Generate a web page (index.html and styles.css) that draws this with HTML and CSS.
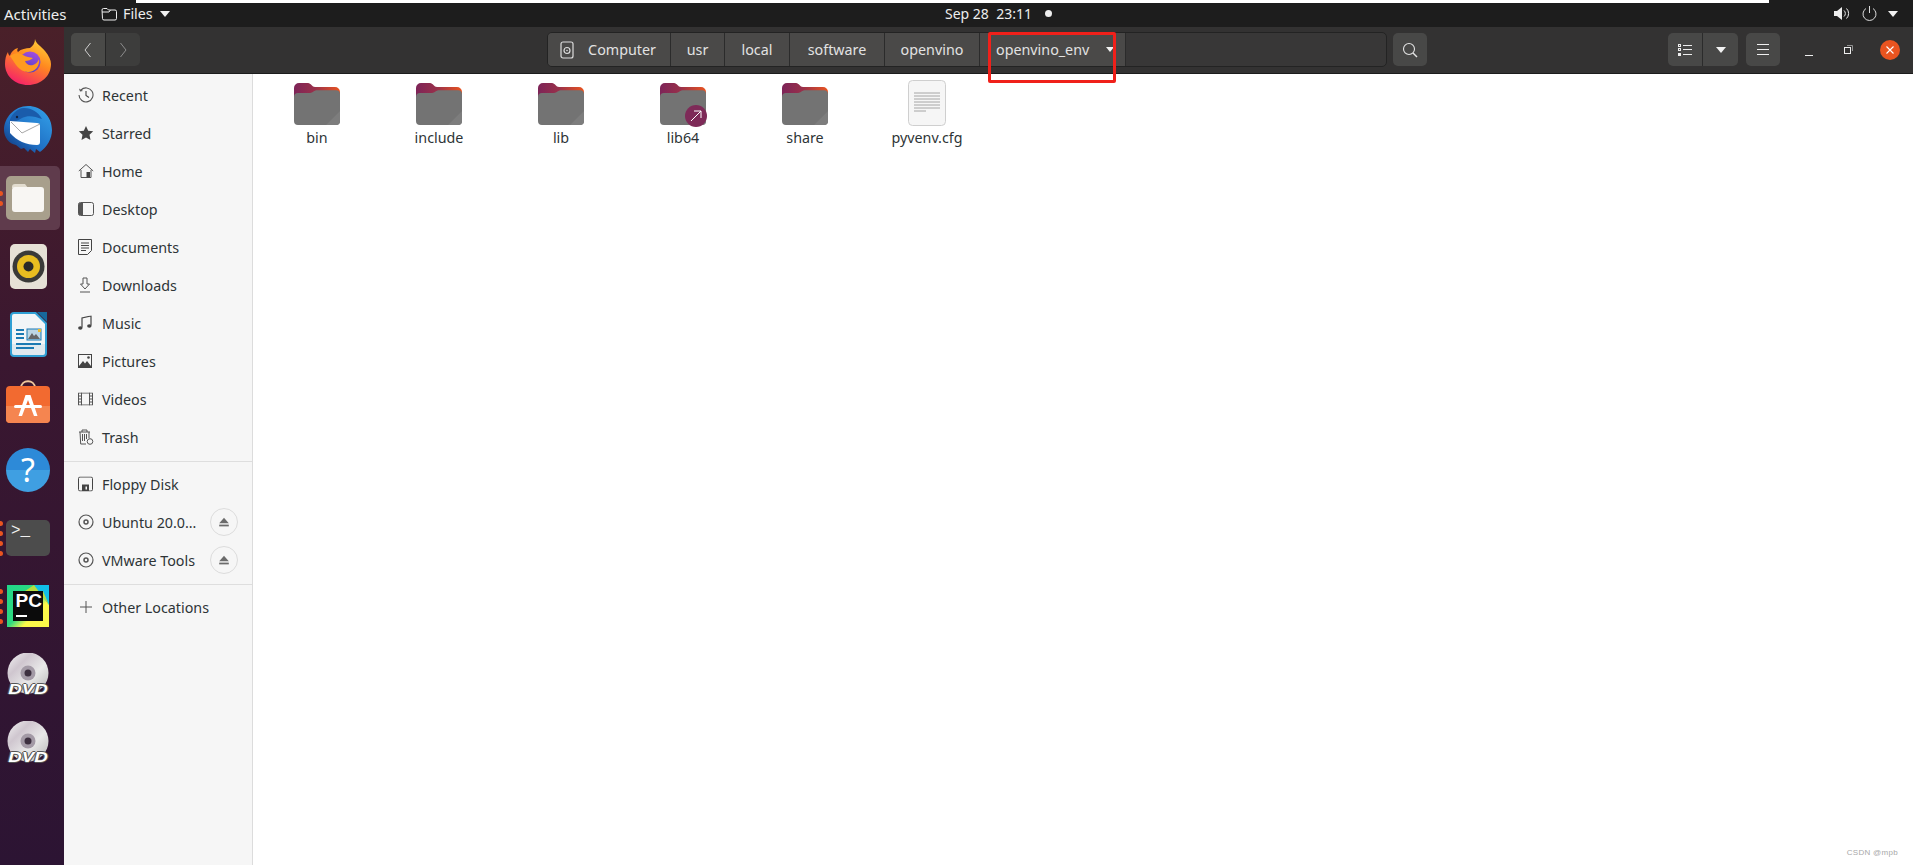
FILE: index.html
```html
<!DOCTYPE html>
<html lang="en">
<head>
  <meta charset="UTF-8">
  <title>openvino_env - Files</title>
  <link rel="stylesheet" href="styles.css">
</head>
<body>
  <svg class="defs" width="0" height="0">
    <defs>
      <linearGradient id="folderBack" x1="0" y1="0" x2="1" y2="0">
        <stop offset="0" stop-color="#7d2458"/>
        <stop offset="0.45" stop-color="#99304a"/>
        <stop offset="1" stop-color="#e95420"/>
      </linearGradient>
      <linearGradient id="foxBody" x1="0.8" y1="0" x2="0.3" y2="1">
        <stop offset="0" stop-color="#ffd23a"/>
        <stop offset="0.45" stop-color="#ff8a1f"/>
        <stop offset="1" stop-color="#f5206a"/>
      </linearGradient>
      <linearGradient id="foxGlobe" x1="0.7" y1="0" x2="0.3" y2="1">
        <stop offset="0" stop-color="#a44de0"/>
        <stop offset="1" stop-color="#4a3fc0"/>
      </linearGradient>
      <linearGradient id="birdBlue" x1="0.9" y1="0.2" x2="0.2" y2="1">
        <stop offset="0" stop-color="#2f97e2"/>
        <stop offset="0.6" stop-color="#1f6fc4"/>
        <stop offset="1" stop-color="#123a80"/>
      </linearGradient>
      <linearGradient id="pcBack" x1="0" y1="0" x2="1" y2="1">
        <stop offset="0" stop-color="#21d789"/>
        <stop offset="0.5" stop-color="#2fd97f"/>
        <stop offset="0.68" stop-color="#fcf84a"/>
        <stop offset="1" stop-color="#fcf84a"/>
      </linearGradient>
      <linearGradient id="discFace" x1="0" y1="0" x2="1" y2="1">
        <stop offset="0" stop-color="#f4f4f4"/>
        <stop offset="0.3" stop-color="#cfc6cf"/>
        <stop offset="0.6" stop-color="#e8e8e8"/>
        <stop offset="1" stop-color="#b4b4b4"/>
      </linearGradient>
      <symbol id="folder" viewBox="0 0 46 42">
        <path d="M0 5a5 5 0 0 1 5-5h9c3 0 4 4 7 4h20a5 5 0 0 1 5 5v14H0z" fill="url(#folderBack)"/>
        <path d="M0 14a4 4 0 0 1 4-4h12c3 0 4-2.700 7-2.700h19a4 4 0 0 1 4 4V38a4 4 0 0 1-4 4H4a4 4 0 0 1-4-4z" fill="#737373"/>
        <path d="M46 28v10a4 4 0 0 1-4 4H32z" fill="#7d7d7d"/>
      </symbol>
      <symbol id="disc" viewBox="0 0 42 42">
        <circle cx="21" cy="20" r="20.500" fill="url(#discFace)"/>
        <circle cx="21" cy="20" r="7.500" fill="#a39aa6"/>
        <circle cx="21" cy="20" r="3.500" fill="#3d3040"/>
      </symbol>
      <symbol id="eject" viewBox="0 0 16 16">
        <path d="M8 3l5.500 6.500h-11z" fill="#6b6b6b"/>
        <rect x="2.500" y="11" width="11" height="2" fill="#6b6b6b"/>
      </symbol>
      <symbol id="optical" viewBox="0 0 16 16">
        <circle cx="8" cy="8" r="7" fill="none" stroke="#555" stroke-width="1.200"/>
        <circle cx="8" cy="8" r="2" fill="none" stroke="#555" stroke-width="1.500"/>
      </symbol>
    </defs>
  </svg>

  <div class="annotation"></div>
  <div class="top-strip"></div>

  <div class="topbar">
    <div class="topbar-left">
      <span class="activities">Activities</span>
      <span class="app-menu">
        <svg class="app-icon" width="16" height="14" viewBox="0 0 16 14"><path d="M1 3a1.500 1.500 0 0 1 1.500-1.500h3.500l1.500 1.500h6.500a1.500 1.500 0 0 1 1.500 1.500v7a1.500 1.500 0 0 1-1.500 1.500h-11a1.500 1.500 0 0 1-1.500-1.500z" fill="none" stroke="#eee" stroke-width="1"/><path d="M1 5h7l1.500-2" fill="none" stroke="#eee" stroke-width="1"/></svg>
        Files
        <span class="caret"></span>
      </span>
    </div>
    <span class="clock">Sep 28&nbsp; 23:11</span>
    <span class="clock-dot"></span>
    <div class="tray">
      <svg width="16" height="15" viewBox="0 0 16 15"><path d="M0 5h3l5-4v13l-5-4H0z" fill="#eee"/><path d="M10 4.500a4 4 0 0 1 0 6M12.500 2.500a7 7 0 0 1 0 10" fill="none" stroke="#eee" stroke-width="1"/></svg>
      <svg class="tray-power" width="15" height="15" viewBox="0 0 15 15"><path d="M4 2.500a6.500 6.500 0 1 0 7 0" fill="none" stroke="#ddd" stroke-width="1"/><path d="M7.500 0v7" stroke="#ddd" stroke-width="1"/></svg>
      <span class="caret tray-caret"></span>
    </div>
  </div>

  <div class="desktop">
    <div class="dock">
      <div class="dock-item">
        <svg width="46" height="46" viewBox="0 0 46 46">
          <path d="M30 0c1 5 6 7 10 12 4 5 6 9 6 13 0 12-10 21-23 21S0 37 0 25c0-5 1-9 3-12 0 2 1 3 2 4 1-4 4-7 8-8-1 2-1 3 0 4 3-3 8-4 12-4 3-2 5-5 5-9z" fill="url(#foxBody)"/>
          <circle cx="25" cy="23" r="10.500" fill="url(#foxGlobe)"/>
          <path d="M5 17c3-3 9-4 13-1 3 2 7 2 10 3-2 2-5 3-8 3 1 3 4 5 8 4 3-1 5-3 6-6 1 7-4 13-11 13-9 0-13-9-18-16z" fill="#ff9b20"/>
        </svg>
      </div>
      <div class="dock-item">
        <svg width="48" height="48" viewBox="0 0 48 48">
          <path d="M24 0c13 0 24 10 24 24 0 9-5 17-12 22l-4-3-1 4-5-4-2 3-4-4-3 1-5-4C5 38 0 31 0 24 0 12 10 0 24 0z" fill="url(#birdBlue)"/>
          <path d="M5 18c1-9 8-16 15-16 8 0 14 4 18 11-8-3-14-4-20-1-4 2-9 5-13 6z" fill="#1a5cab"/>
          <path d="M6 15l27 2c2 0 3 1 3 3v16c0 2-1 3-3 3-11 0-20-4-27-12z" fill="#fff"/>
          <path d="M7 16l11 11 18-9" fill="none" stroke="#a8a8a8" stroke-width="1"/>
          <circle cx="13" cy="11" r="1.200" fill="#10203f"/>
        </svg>
      </div>
      <div class="dock-item active">
        <span class="run-dots"><i></i><i></i></span>
        <svg width="44" height="44" viewBox="0 0 44 44">
          <rect width="44" height="44" rx="5" fill="#a89f8c"/>
          <path d="M6 11a3 3 0 0 1 3-3h10l3 4H6z" fill="#e2dccf"/>
          <path d="M6 14a3 3 0 0 1 3-3h26a3 3 0 0 1 3 3v19a3 3 0 0 1-3 3H9a3 3 0 0 1-3-3z" fill="#f8f6f3"/>
        </svg>
      </div>
      <div class="dock-item">
        <svg width="37" height="45" viewBox="0 0 37 45">
          <rect width="37" height="45" rx="5" fill="#e6e1d6"/>
          <circle cx="18.500" cy="22.500" r="16" fill="#3a3a38"/>
          <circle cx="18.500" cy="22.500" r="11.500" fill="#e8bd20"/>
          <circle cx="18.500" cy="22.500" r="5" fill="#2a2a28"/>
        </svg>
      </div>
      <div class="dock-item">
        <svg width="37" height="45" viewBox="0 0 37 45">
          <path d="M4 0h22l11 11v30a4 4 0 0 1-4 4H4a4 4 0 0 1-4-4V4a4 4 0 0 1 4-4z" fill="#2f9fd4"/>
          <path d="M4 2h21l10 10v20H2V4a2 2 0 0 1 2-2z" fill="#f2f5f7"/>
          <path d="M2 32h33v9a2 2 0 0 1-2 2H4a2 2 0 0 1-2-2z" fill="#dfe9ef"/>
          <path d="M27 0h10v10z" fill="#17689b"/>
          <rect x="6" y="17" width="8" height="2" fill="#1b7ab3"/>
          <rect x="6" y="21" width="8" height="2" fill="#1b7ab3"/>
          <rect x="6" y="25" width="8" height="2" fill="#1b7ab3"/>
          <rect x="6" y="31" width="25" height="2" fill="#1b7ab3"/>
          <rect x="6" y="35" width="18" height="2" fill="#1b7ab3"/>
          <rect x="17" y="17" width="14" height="11" fill="#bcd6e4" stroke="#1b7ab3" stroke-width="1"/>
          <path d="M18 27l4-6 2 3 2-2 4 5z" fill="#666"/>
          <rect x="28" y="17" width="3" height="3" fill="#eebc2b"/>
        </svg>
      </div>
      <div class="dock-item">
        <svg width="44" height="44" viewBox="0 0 44 44">
          <path d="M15 8c0-9 14-9 14 0" fill="none" stroke="#f0c89c" stroke-width="1.800"/>
          <rect y="6" width="44" height="37" rx="4" fill="#f26a30"/>
          <path d="M0 26h44v13a4 4 0 0 1-4 4H4a4 4 0 0 1-4-4z" fill="#f58550"/>
          <path d="M19.500 15h5l7 21h-3.500l-6-16-6 16H12.500z" fill="#fff"/>
          <rect x="8" y="25" width="28" height="3" rx="1.500" fill="#fff"/>
        </svg>
      </div>
      <div class="dock-item">
        <div class="help-icon">?</div>
      </div>
      <div class="dock-item">
        <span class="run-dots"><i></i><i></i><i></i><i></i></span>
        <div class="terminal-icon">&gt;_</div>
      </div>
      <div class="dock-item">
        <span class="run-dots"><i></i><i></i><i></i><i></i></span>
        <svg width="42" height="42" viewBox="0 0 42 42">
          <rect width="42" height="42" fill="url(#pcBack)"/>
          <path d="M27 0h15v20z" fill="#10bfe8"/>
          <path d="M27 0l-9 6h18l6 14z" fill="#b7dc3f"/>
          <rect x="6" y="6" width="30" height="30" fill="#0b0b0b"/>
          <text x="8.500" y="21.500" class="pc-mark">PC</text>
          <rect x="9" y="30" width="11" height="2" fill="#fff"/>
        </svg>
      </div>
      <div class="dock-item">
        <div class="dvd"><svg width="42" height="42"><use href="#disc"/></svg><span class="dvd-mark">DVD</span></div>
      </div>
      <div class="dock-item">
        <div class="dvd"><svg width="42" height="42"><use href="#disc"/></svg><span class="dvd-mark">DVD</span></div>
      </div>
    </div>

    <div class="window">
      <div class="header">
        <div class="nav-group">
          <button class="nav-btn back">
            <svg width="8" height="16" viewBox="0 0 8 16"><path d="M6.500 1L1 8l5.500 7" fill="none" stroke="#cfcfcf" stroke-width="1"/></svg>
          </button>
          <button class="nav-btn">
            <svg width="8" height="16" viewBox="0 0 8 16"><path d="M1.500 1L7 8l-5.500 7" fill="none" stroke="#8c8c8c" stroke-width="1"/></svg>
          </button>
        </div>
        <div class="pathbar">
          <span class="crumb crumb-root">
            <svg width="14" height="18" viewBox="0 0 14 18"><rect x="1" y="1" width="12" height="16" rx="2" fill="none" stroke="#ddd" stroke-width="1.200"/><circle cx="7" cy="9.500" r="3" fill="none" stroke="#ddd" stroke-width="1.200"/><circle cx="7" cy="9.500" r="0.800" fill="#ddd"/></svg>
            Computer
          </span>
          <span class="crumb w-usr">usr</span>
          <span class="crumb w-local">local</span>
          <span class="crumb w-software">software</span>
          <span class="crumb w-openvino">openvino</span>
          <span class="crumb crumb-last">openvino_env <span class="caret small"></span></span>
        </div>
        <button class="tool-btn search-btn">
          <svg width="16" height="16" viewBox="0 0 16 16"><circle cx="7" cy="7" r="5.500" fill="none" stroke="#e4e4e4" stroke-width="1.100"/><path d="M11 11l4 4" stroke="#e4e4e4" stroke-width="1.500"/></svg>
        </button>
        <div class="header-right">
          <div class="view-group">
            <button class="tool-btn joined-left">
              <svg width="14" height="12" viewBox="0 0 14 12"><g fill="none" stroke="#eee"><rect x="0.500" y="0.500" width="2" height="2"/><rect x="0.500" y="4.500" width="2" height="2"/></g><rect y="9" width="3" height="3" fill="#eee"/><path d="M5 1.500h9M5 5.500h9M5 10.500h9" stroke="#eee"/></svg>
            </button>
            <button class="tool-btn joined-right"><span class="caret"></span></button>
          </div>
          <button class="tool-btn menu-btn">
            <svg width="12" height="11" viewBox="0 0 12 11"><path d="M0 .5h12M0 5.500h12M0 10.500h12" stroke="#eee"/></svg>
          </button>
          <span class="win-btn win-min"></span>
          <span class="win-btn win-restore">
            <svg width="9" height="9" viewBox="0 0 9 9"><rect x="0.500" y="2.500" width="6" height="6" fill="none" stroke="#eee"/><path d="M3 .5h5.500V6" fill="none" stroke="#aaa" stroke-width="0.800"/></svg>
          </span>
          <span class="win-close">
            <svg width="8" height="8" viewBox="0 0 8 8"><path d="M.5.5l7 7M7.500.5l-7 7" stroke="#fff" stroke-width="1.100"/></svg>
          </span>
        </div>
      </div>

      <div class="body-row">
        <div class="sidebar">
          <div class="side-row">
            <svg width="16" height="16" viewBox="0 0 16 16"><path d="M3 3a7 7 0 1 1-2 5" fill="none" stroke="#555" stroke-width="1.100"/><path d="M1 1.500l1 3 3-.5z" fill="#555"/><path d="M8 4v4.500l3 2" fill="none" stroke="#444" stroke-width="1.100"/></svg>
            Recent
          </div>
          <div class="side-row">
            <svg width="16" height="16" viewBox="0 0 16 16"><path d="M8 1l2.200 4.700 5 .6-3.700 3.500 1 5.100L8 12.400l-4.500 2.500 1-5.100L.8 6.300l5-.6z" fill="#444"/></svg>
            Starred
          </div>
          <div class="side-row">
            <svg width="16" height="16" viewBox="0 0 16 16"><path d="M.8 8L8 1.500 15.200 8M3 7v7.500h10V7" fill="none" stroke="#555" stroke-width="1"/><rect x="8.500" y="9" width="3.500" height="5.500" fill="#444"/></svg>
            Home
          </div>
          <div class="side-row">
            <svg width="16" height="14" viewBox="0 0 16 14"><rect x="0.500" y="0.500" width="15" height="13" rx="2" fill="none" stroke="#555"/><path d="M2 1h3v12H2a1.500 1.500 0 0 1-1.500-1.500v-9A1.500 1.500 0 0 1 2 1z" fill="#555"/></svg>
            Desktop
          </div>
          <div class="side-row">
            <svg width="14" height="16" viewBox="0 0 14 16"><path d="M.5.5h13v11l-4 4h-9z" fill="none" stroke="#444"/><path d="M3 4h8M3 6.500h8M3 9h8M3 11.500h5" stroke="#444"/></svg>
            Documents
          </div>
          <div class="side-row">
            <svg width="14" height="16" viewBox="0 0 14 16"><path d="M5 1h4v6h2.500L7 12 2.500 7H5z" fill="none" stroke="#555"/><path d="M2 15h10" stroke="#555"/></svg>
            Downloads
          </div>
          <div class="side-row">
            <svg width="14" height="15" viewBox="0 0 14 15"><path d="M4 12V2.500L13 .5V10" fill="none" stroke="#444" stroke-width="1.200"/><ellipse cx="2.300" cy="12.500" rx="2.200" ry="1.800" fill="#444"/><ellipse cx="11.300" cy="10.500" rx="2.200" ry="1.800" fill="#444"/></svg>
            Music
          </div>
          <div class="side-row">
            <svg width="14" height="14" viewBox="0 0 14 14"><rect x="0.500" y="0.500" width="13" height="13" fill="none" stroke="#444"/><path d="M1 12l4-5 2 2.500L9 7l4 5v1.500H1z" fill="#444"/><circle cx="10.500" cy="3.500" r="1.300" fill="#444"/></svg>
            Pictures
          </div>
          <div class="side-row">
            <svg width="15" height="13" viewBox="0 0 15 13"><rect x="0.500" y="0.500" width="14" height="12" fill="none" stroke="#555"/><path d="M3.500 0v13M11.500 0v13M0 3.500h3.500M0 6.500h3.500M0 9.500h3.500M11.500 3.500H15M11.500 6.500H15M11.500 9.500H15" stroke="#555"/></svg>
            Videos
          </div>
          <div class="side-row">
            <svg width="16" height="16" viewBox="0 0 16 16"><path d="M1 3h11M4 3V1h5v2M2 3l.7 12H8" fill="none" stroke="#555"/><path d="M11 3v6M4.500 5v7M6.500 5v7M8.500 5v5" stroke="#555"/><circle cx="12" cy="12.500" r="2.800" fill="none" stroke="#555"/></svg>
            Trash
          </div>
          <div class="side-sep"></div>
          <div class="side-row">
            <svg width="15" height="15" viewBox="0 0 15 15"><path d="M2 .5h11A1.500 1.500 0 0 1 14.500 2v11a1.500 1.500 0 0 1-1.500 1.500H2A1.500 1.500 0 0 1 .5 13V2A1.500 1.500 0 0 1 2 .5z" fill="none" stroke="#444"/><rect x="4" y="8" width="7" height="6.500" fill="#444"/><rect x="7.500" y="10" width="1.500" height="3" fill="#f6f6f6"/></svg>
            Floppy Disk
          </div>
          <div class="side-row">
            <svg width="16" height="16"><use href="#optical"/></svg>
            <span class="side-label">Ubuntu 20.0…</span>
            <span class="eject"><svg width="14" height="14"><use href="#eject"/></svg></span>
          </div>
          <div class="side-row">
            <svg width="16" height="16"><use href="#optical"/></svg>
            <span class="side-label">VMware Tools</span>
            <span class="eject"><svg width="14" height="14"><use href="#eject"/></svg></span>
          </div>
          <div class="side-sep"></div>
          <div class="side-row">
            <svg width="16" height="16" viewBox="0 0 16 16"><path d="M8 2v12M2 8h12" stroke="#555" stroke-width="1"/></svg>
            Other Locations
          </div>
        </div>

        <div class="content">
          <div class="file-grid">
            <div class="file-item">
              <svg class="folder-icon" width="46" height="42"><use href="#folder"/></svg>
              <span class="file-name">bin</span>
            </div>
            <div class="file-item">
              <svg class="folder-icon" width="46" height="42"><use href="#folder"/></svg>
              <span class="file-name">include</span>
            </div>
            <div class="file-item">
              <svg class="folder-icon" width="46" height="42"><use href="#folder"/></svg>
              <span class="file-name">lib</span>
            </div>
            <div class="file-item">
              <div class="link-folder">
                <svg class="folder-icon" width="46" height="42"><use href="#folder"/></svg>
                <span class="link-badge">
                  <svg width="12" height="12" viewBox="0 0 12 12"><path d="M1 11L11 1M4 1h7v7" fill="none" stroke="#fff" stroke-width="1"/></svg>
                </span>
              </div>
              <span class="file-name">lib64</span>
            </div>
            <div class="file-item">
              <svg class="folder-icon" width="46" height="42"><use href="#folder"/></svg>
              <span class="file-name">share</span>
            </div>
            <div class="file-item file-doc">
              <svg width="38" height="46" viewBox="0 0 38 46">
                <rect x="0.500" y="0.500" width="37" height="45" rx="4" fill="#f6f6f6" stroke="#cfcfcf"/>
                <path d="M6 13h26M6 16h26M6 19h26M6 22h26M6 25h26M6 28h26M6 31h12" stroke="#9c9c9c" stroke-width="0.900"/>
              </svg>
              <span class="file-name">pyvenv.cfg</span>
            </div>
          </div>
          <span class="watermark">CSDN @mpb</span>
        </div>
      </div>
    </div>
  </div>
</body>
</html>
```

FILE: styles.css
```css
* {
  margin: 0;
  padding: 0;
  box-sizing: border-box;
}

html, body {
  height: 100%;
  overflow: hidden;
}

body {
  font-family: "Noto Sans", sans-serif;
  font-size: 14.3px;
  color: #2e3436;
  background: #fff;
  display: flex;
  flex-direction: column;
}

.defs {
  position: absolute;
}

.caret {
  display: inline-block;
  width: 0;
  height: 0;
  border-left: 5px solid transparent;
  border-right: 5px solid transparent;
  border-top: 6px solid #f2f2f2;
}

.caret.small {
  border-left-width: 4px;
  border-right-width: 4px;
  border-top-width: 5px;
  margin-left: 17px;
}

/* Screenshot overlays */
.annotation {
  position: absolute;
  left: 988px;
  top: 32px;
  width: 128px;
  height: 51px;
  border: 3px solid #f0201a;
  border-radius: 2px;
  z-index: 5;
}

.top-strip {
  position: absolute;
  left: 136px;
  top: 0;
  width: 1633px;
  height: 3px;
  background: #fff;
  z-index: 5;
}

/* Top bar */
.topbar {
  height: 27px;
  background: #1d1d1d;
  color: #eeeeee;
  display: flex;
  align-items: center;
  flex-shrink: 0;
}

.topbar-left {
  width: 945px;
  display: flex;
  align-items: center;
}

.activities {
  padding-left: 4px;
  width: 101px;
  font-size: 15px;
}

.app-menu {
  display: flex;
  align-items: center;
}

.app-icon {
  margin-right: 6px;
}

.app-menu .caret {
  margin-left: 7px;
}

.clock {
  font-size: 14px;
  width: 99px;
}

.clock-dot {
  width: 7px;
  height: 7px;
  border-radius: 50%;
  background: #eeeeee;
  margin-left: 1px;
}

.tray {
  margin-left: auto;
  display: flex;
  align-items: center;
  padding-right: 15px;
}

.tray-power {
  margin-left: 12px;
}

.tray-caret {
  margin-left: 11px;
}

/* Dock */
.desktop {
  flex: 1;
  display: flex;
  min-height: 0;
}

.dock {
  width: 64px;
  flex-shrink: 0;
  background: linear-gradient(180deg, #4a2029 0%, #3a1730 40%, #2c1433 100%);
  padding-top: 1px;
  padding-right: 8px;
}

.dock-item {
  position: relative;
  height: 68px;
  display: flex;
  align-items: center;
  justify-content: center;
}

.dock-item.active {
  background: #5f3b4c;
  border-radius: 0 5px 5px 0;
  height: 64px;
  margin: 2px -4px 2px 0;
  padding-right: 4px;
}

.run-dots {
  position: absolute;
  left: 0;
  top: 0;
  bottom: 0;
  display: flex;
  flex-direction: column;
  justify-content: center;
  gap: 5px;
}

.run-dots i {
  display: block;
  width: 3px;
  height: 5px;
  background: #e95420;
  border-radius: 0 3px 3px 0;
}

.help-icon {
  width: 44px;
  height: 44px;
  border-radius: 50%;
  background: linear-gradient(180deg, #2d8ad8 50%, #3f9fe2 50%);
  color: #fff;
  font-size: 32px;
  line-height: 44px;
  text-align: center;
}

.terminal-icon {
  width: 44px;
  height: 36px;
  background: #4c4c4c;
  border-radius: 5px;
  color: #f0f0f0;
  font-family: "Liberation Mono", monospace;
  font-size: 16px;
  line-height: 16px;
  padding: 3px 0 0 5px;
}

.pc-mark {
  font-family: "Liberation Sans", sans-serif;
  font-weight: 700;
  font-size: 19px;
  fill: #fff;
}

.dvd {
  position: relative;
  width: 42px;
  height: 42px;
}

.dvd-mark {
  position: absolute;
  left: 0;
  right: 0;
  bottom: -1px;
  text-align: center;
  font-family: "Liberation Sans", sans-serif;
  font-weight: 700;
  font-style: italic;
  font-size: 15px;
  line-height: 15px;
  color: #fff;
  transform: scaleX(1.25);
  text-shadow: 1px 0 0 #555, -1px 0 0 #555, 0 1px 0 #555, 0 -1px 0 #555;
}

/* Window */
.window {
  flex: 1;
  min-width: 0;
  display: flex;
  flex-direction: column;
}

.header {
  height: 47px;
  background: #333232;
  border-bottom: 1px solid #1c1c1c;
  display: flex;
  align-items: center;
  padding: 0 0 1px 7px;
  flex-shrink: 0;
}

.nav-group {
  display: flex;
  width: 69px;
  height: 33px;
  background: #3d3d3c;
  border-radius: 5px;
  overflow: hidden;
}

.nav-btn {
  flex: 1;
  border: none;
  background: none;
  display: flex;
  align-items: center;
  justify-content: center;
}

.nav-btn.back {
  background: #4a4a48;
  border-right: 1px solid #262626;
}

.pathbar {
  margin-left: 407px;
  width: 840px;
  height: 35px;
  background: #383737;
  border: 1px solid #232323;
  border-radius: 5px;
  display: flex;
  overflow: hidden;
}

.crumb {
  display: flex;
  align-items: center;
  justify-content: center;
  background: #4a4948;
  color: #e2e2e2;
  border-right: 1px solid #2b2b2b;
  flex-shrink: 0;
}

.crumb-root {
  width: 123px;
  gap: 14px;
  padding-right: 2px;
}

.w-usr {
  width: 54px;
}

.w-local {
  width: 65px;
}

.w-software {
  width: 95px;
}

.w-openvino {
  width: 95px;
}

.crumb-last {
  width: 146px;
  justify-content: flex-start;
  padding-left: 16px;
}

.tool-btn {
  width: 34px;
  height: 33px;
  border: none;
  border-radius: 5px;
  background: #484847;
  display: flex;
  align-items: center;
  justify-content: center;
}

.search-btn {
  margin-left: 6px;
}

.header-right {
  margin-left: auto;
  display: flex;
  align-items: center;
}

.view-group {
  display: flex;
}

.view-group .tool-btn {
  width: 35px;
}

.joined-left {
  border-radius: 5px 0 0 5px;
  border-right: 1px solid #2b2b2b;
}

.joined-right {
  border-radius: 0 5px 5px 0;
}

.menu-btn {
  margin-left: 8px;
}

.win-btn {
  width: 39px;
  display: flex;
  justify-content: center;
}

.win-restore {
  width: 41px;
}

.win-min {
  height: 1px;
  margin: 11px 0 0 9px;
}

.win-min::before {
  content: "";
  width: 8px;
  height: 1px;
  background: #eeeeee;
}

.win-close {
  width: 20px;
  height: 20px;
  border-radius: 50%;
  background: #e95420;
  display: flex;
  align-items: center;
  justify-content: center;
  margin: 0 13px 0 11px;
}

/* Sidebar and files */
.body-row {
  flex: 1;
  display: flex;
  min-height: 0;
}

.sidebar {
  width: 189px;
  flex-shrink: 0;
  background: #f6f6f6;
  border-right: 1px solid #dcdcdc;
  padding-top: 2px;
}

.side-row {
  position: relative;
  height: 38px;
  display: flex;
  align-items: center;
  padding-left: 38px;
}

.side-row > svg:first-child {
  position: absolute;
  left: 14px;
  top: 50%;
  transform: translateY(-50%);
}

.side-sep {
  height: 1px;
  background: #dedede;
  margin: 5px 0 3px;
}

.eject {
  position: absolute;
  left: 146px;
  top: 5px;
  width: 28px;
  height: 28px;
  border: 1px solid #dcdcdc;
  border-radius: 50%;
  display: flex;
  align-items: center;
  justify-content: center;
}

.content {
  flex: 1;
  position: relative;
  background: #fff;
}

.file-grid {
  display: flex;
  padding: 8px 0 0 3px;
}

.file-item {
  width: 122px;
  display: flex;
  flex-direction: column;
  align-items: center;
  padding-top: 1px;
}

.file-item .file-name {
  margin-top: 2px;
  line-height: 22px;
}

.file-doc {
  padding-top: 0;
  margin-top: -2px;
}

.file-doc .file-name {
  margin-top: 1px;
}

.link-folder {
  position: relative;
  width: 46px;
  height: 42px;
}

.folder-icon {
  display: block;
}

.link-badge {
  position: absolute;
  right: -1px;
  bottom: -2px;
  width: 22px;
  height: 22px;
  background: #7e2a58;
  border-radius: 50%;
  display: flex;
  align-items: center;
  justify-content: center;
}

.watermark {
  position: absolute;
  right: 15px;
  bottom: 8px;
  font-family: "Liberation Sans", sans-serif;
  font-size: 8px;
  color: #a8a8a8;
  letter-spacing: 0.3px;
}
```
